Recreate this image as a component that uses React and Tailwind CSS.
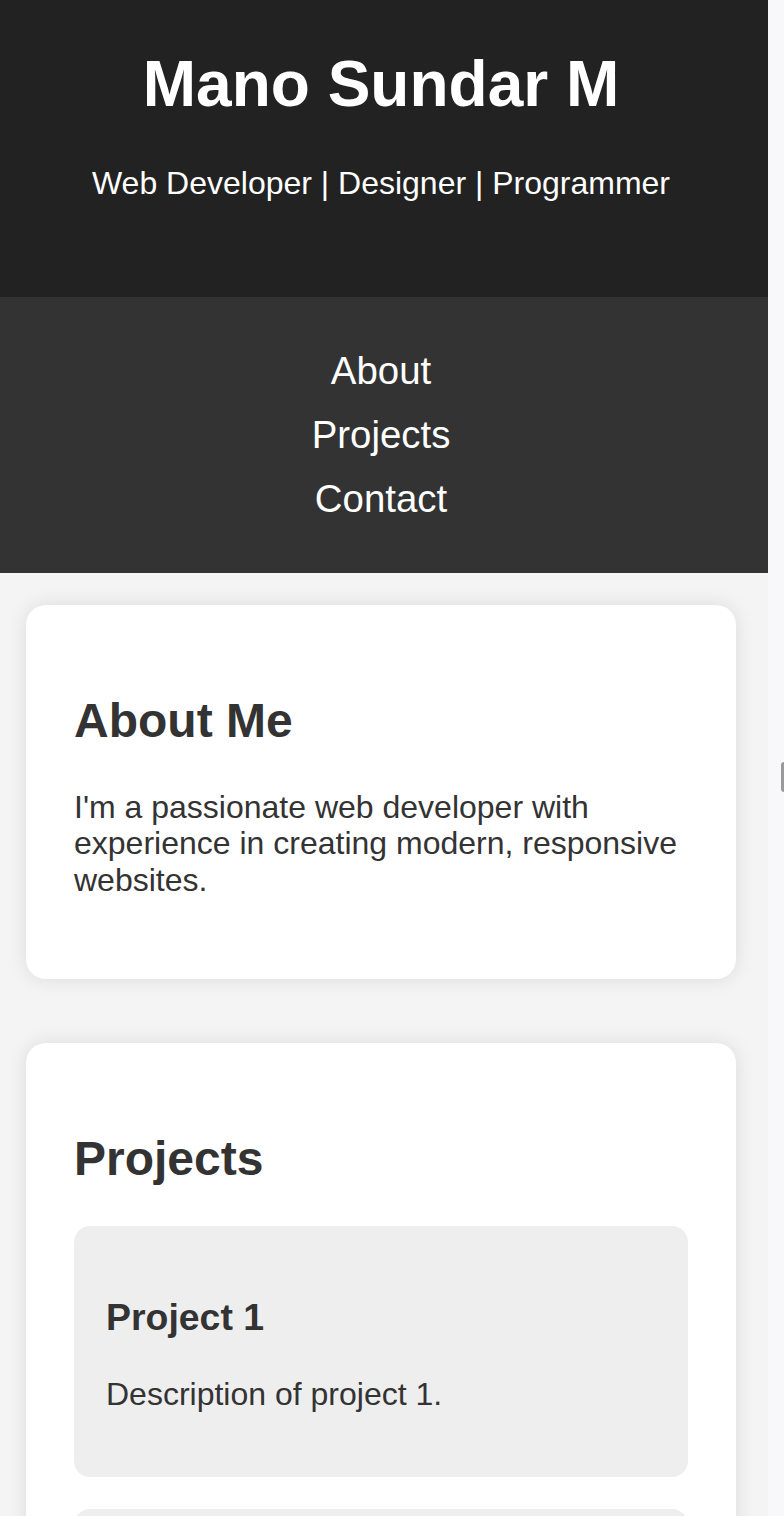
const projects = [
  { id: 1, title: 'Project 1', desc: 'Description of project 1.' },
  { id: 2, title: 'Project 2', desc: 'Description of project 2.' },
];

const navLinks = ['About', 'Projects', 'Contact'];

const App = () => {
  return (
    <div className="flex h-[1516px] w-full overflow-hidden bg-[#f4f4f4] font-['Liberation_Sans',Arial,sans-serif] text-[#333]">
      <div className="w-[768px] shrink-0">
        {/* Header */}
        <header className="bg-[#222] pt-[48px] pr-[6px] pb-[96px] text-center text-white">
          <h1 className="mb-[43px] text-[64px] font-bold leading-[73.6px]">Mano Sundar M</h1>
          <p className="text-[32px] leading-[36.8px]">Web Developer | Designer | Programmer</p>
        </header>

        {/* Nav */}
        <nav className="bg-[#333] pt-[42px] pr-[6px] pb-[42px] text-center">
          {navLinks.map((link) => (
            <div key={link} className="text-[38.4px] leading-[64px] text-white">
              {link}
            </div>
          ))}
        </nav>

        {/* About */}
        <section className="mt-[32px] ml-[26px] w-[710px] rounded-[20px] bg-white p-[48px] shadow-[0_0_20px_rgba(0,0,0,0.1)]">
          <h2 className="mt-[40px] mb-[40px] text-[48px] font-bold leading-[55.2px]">About Me</h2>
          <p className="mb-[32px] text-[32px] leading-[36.8px]">
            I'm a passionate web developer with experience in creating modern, responsive websites.
          </p>
        </section>

        {/* Projects */}
        <section className="mt-[64px] ml-[26px] w-[710px] rounded-[20px] bg-white p-[48px] shadow-[0_0_20px_rgba(0,0,0,0.1)]">
          <h2 className="mt-[40px] mb-[40px] text-[48px] font-bold leading-[55.2px]">Projects</h2>
          <div className="flex flex-col gap-[32px]">
            {projects.map((p) => (
              <div key={p.id} className="rounded-[16px] bg-[#eeeeee] p-[32px]">
                <h3 className="mt-[37.4px] mb-[37.4px] text-[37.44px] font-bold leading-[43px]">{p.title}</h3>
                <p className="mb-[32px] text-[32px] leading-[36.8px]">{p.desc}</p>
              </div>
            ))}
          </div>
        </section>
      </div>

      {/* scrollbar track */}
      <div className="w-[16px] shrink-0 bg-[#f8f8fa] pt-[762px]">
        <div className="ml-auto h-[30px] w-[3px] rounded-l-sm bg-[#9a9a9a]" />
      </div>
    </div>
  );
};

export default App;
